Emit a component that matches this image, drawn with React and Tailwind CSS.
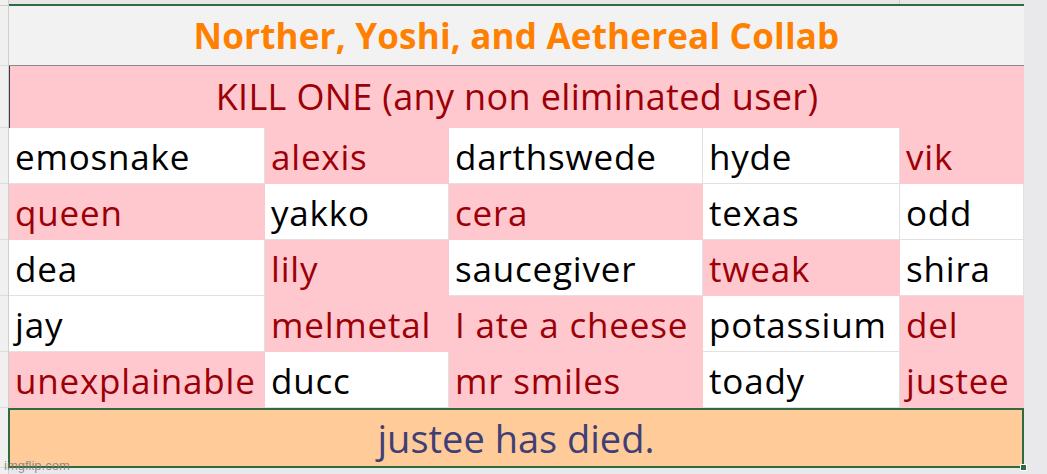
const rows = [
  [["emosnake", 0], ["alexis", 1], ["darthswede", 0], ["hyde", 0], ["vik", 1]],
  [["queen", 1], ["yakko", 0], ["cera", 1], ["texas", 0], ["odd", 0]],
  [["dea", 0], ["lily", 1], ["saucegiver", 0], ["tweak", 1], ["shira", 0]],
  [["jay", 0], ["melmetal", 1], ["I ate a cheese", 1], ["potassium", 0], ["del", 1]],
  [["unexplainable", 1], ["ducc", 0], ["mr smiles", 1], ["toady", 0], ["justee", 1]],
];

const cols = ["w-[256px]", "w-[184px]", "w-[254px]", "w-[197px]", "w-[124px]"];

const Cell = ({ text, bad, width }) => (
  <div
    className={`${width} h-[56px] flex items-center pl-[6px] pt-[2px] border-r border-b overflow-hidden ${
      bad
        ? "bg-[#ffc7ce] text-[#9c0006] border-[#ffc7ce]"
        : "bg-white text-black border-[#e1e1e1]"
    }`}
  >
    <span className="text-[35px] leading-none whitespace-nowrap tracking-[0.8px]">{text}</span>
  </div>
);

export default function App() {
  return (
    <div
      className="relative w-[1047px] h-[474px] bg-[#e9e9ec] flex overflow-hidden"
      style={{ fontFamily: "'Open Sans', sans-serif" }}
    >
      {/* Row headers */}
      <div className="w-[9px] flex flex-col bg-[#f0f0f0] border-r border-[#cfcfcf]">
        <div className="h-[6px] border-b border-[#cfcfcf]" />
        <div className="h-[60px] border-b border-[#dcdcdc]" />
        <div className="h-[62px] border-b border-[#dcdcdc]" />
        {rows.map((_, i) => (
          <div key={i} className="h-[56px] border-b border-[#dcdcdc]" />
        ))}
        <div className="h-[60px] border-b border-[#dcdcdc]" />
      </div>

      {/* Sheet */}
      <div className="w-[1015px] flex flex-col">
        <div className="h-[4px] flex bg-[#e6e6e6]">
          <div className="w-[891px] border-r border-[#cfcfcf]" />
        </div>
        <div className="h-[2px] bg-[#2e6b43]" />
        <div className="h-[60px] bg-[#f2f2f2] border-b border-[#8a8a8a] flex items-center justify-center">
          <span className="text-[35px] font-bold text-[#ff8000] leading-none tracking-[0.2px]">
            Norther, Yoshi, and Aethereal Collab
          </span>
        </div>
        <div className="h-[62px] bg-[#ffc7ce] border-l border-[#3a3a3a] flex items-center justify-center">
          <span className="text-[36px] text-[#9c0006] leading-none tracking-[0.35px]">
            KILL ONE (any non eliminated user)
          </span>
        </div>
        {rows.map((r, i) => (
          <div key={i} className="flex">
            {r.map(([t, b], j) => (
              <Cell key={j} text={t} bad={b} width={cols[j]} />
            ))}
          </div>
        ))}
        <div className="relative h-[60px] bg-[#ffcc99] border-2 border-[#2e6b43] flex items-center justify-center ml-[-1px]">
          <span className="text-[38px] text-[#3f3f76] leading-none">justee has died.</span>
          <div className="absolute right-[-5px] bottom-[-5px] w-[7px] h-[7px] bg-[#2e6b43] border border-white" />
        </div>
      </div>

      <span
        className="absolute left-[4px] bottom-[2px] text-[13px] leading-none text-[#777]/80 whitespace-nowrap"
        style={{ fontFamily: "'Liberation Sans', sans-serif" }}
      >
        imgflip.com
      </span>
    </div>
  );
}
